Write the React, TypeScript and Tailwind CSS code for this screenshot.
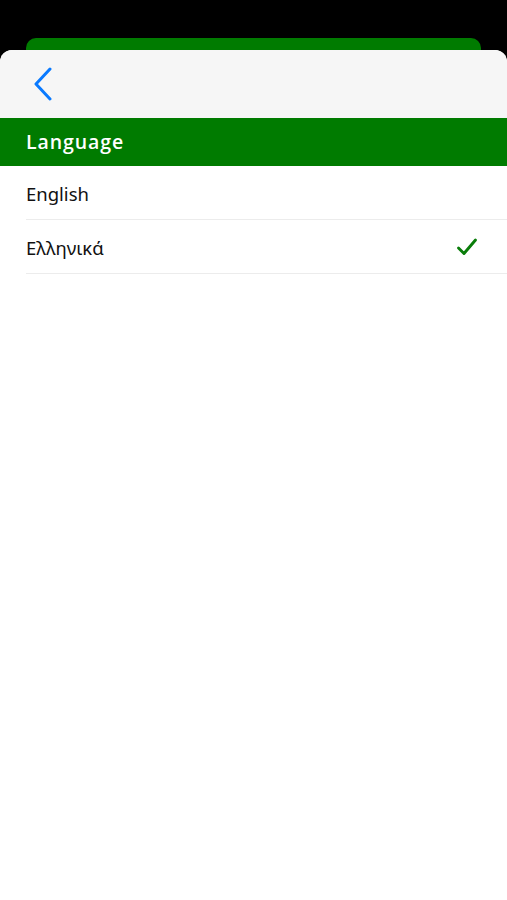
import React from 'react';

const languages = [
  {code: 'en', label: 'English'},
  {code: 'el', label: 'Ελληνικά'},
];

const App: React.FC = () => {
  const selected = 'el';

  return (
    <div className="w-full min-h-screen bg-black pt-[38px]" style={{fontFamily: '"Open Sans", "Noto Sans", sans-serif'}}>
      {/* card peeking out behind the sheet */}
      <div className="mx-[26px] h-[20px] -mb-[8px] rounded-t-[10px] bg-[#007b00]" />
      <div className="relative min-h-[850px] bg-white rounded-t-[12px] overflow-hidden">
        <div className="h-[68px] bg-[#f6f6f6] flex items-center px-[32px]">
          <button className="flex items-center">
            <svg width="22" height="34" viewBox="0 0 22 34" fill="none">
              <path d="M18 2 L4 17 L18 32" stroke="#0a7aff" strokeWidth="3" strokeLinecap="round" strokeLinejoin="round" />
            </svg>
          </button>
        </div>
        <div className="h-[48px] bg-[#007b00] flex items-center px-[26px]">
          <span className="text-white text-[19.5px] font-semibold tracking-[0.9px]">Language</span>
        </div>
        <div className="pl-[26px]">
          {languages.map((lang) => (
            <div key={lang.code} className="h-[54px] flex items-center justify-between border-b border-[#ececec] pr-[28px] pt-[3px]">
              <span className="text-[18.5px] text-[#111]" style={{fontFamily: '"Noto Sans", "Open Sans", sans-serif'}}>{lang.label}</span>
              {selected === lang.code && (
                <svg width="24" height="22" viewBox="0 0 24 22" fill="none" className="-mt-[2px]">
                  <path d="M3.5 12 L9 17.5 L20.5 4" stroke="#0a7d0a" strokeWidth="2.9" strokeLinecap="round" strokeLinejoin="round" />
                </svg>
              )}
            </div>
          ))}
        </div>
      </div>
    </div>
  );
};

export default App;
